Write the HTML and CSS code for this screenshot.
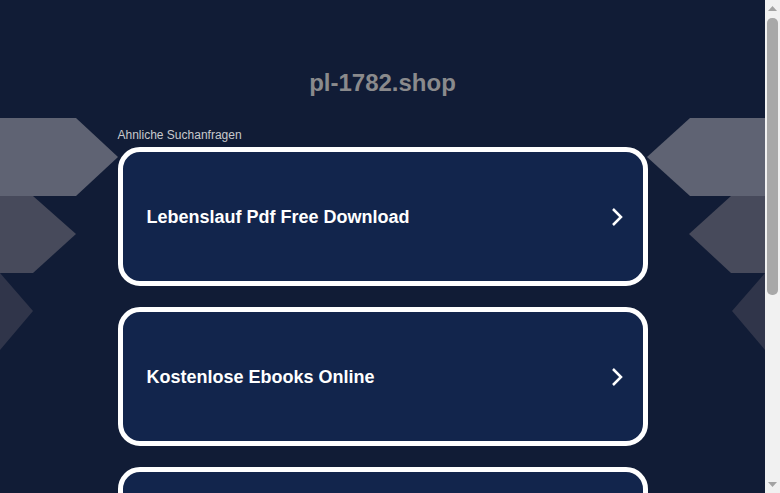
FILE: index.html
```html
<!DOCTYPE html>
<html>
<head>
<meta charset="utf-8">
<link rel="stylesheet" href="styles.css">
</head>
<body>
<div class="frame">
  <div class="viewport">
    <svg class="shapes" width="765" height="493" viewBox="0 0 765 493">
      <polygon points="0,118 76,118 118,157 76,196 0,196" fill="#5f6373"/>
      <polygon points="0,196 33,196 76,234 33,273 0,273" fill="#474a5b"/>
      <polygon points="0,273 33,311 0,350" fill="#30354a"/>
      <polygon points="765,118 690,118 647,157 690,196 765,196" fill="#5f6373"/>
      <polygon points="765,196 731,196 689,234 731,273 765,273" fill="#474a5b"/>
      <polygon points="765,273 732,311 765,350" fill="#30354a"/>
    </svg>
    <main class="page">
      <h1 class="title">pl-1782.shop</h1>
      <div class="label">Ahnliche Suchanfragen</div>
      <div class="list">
        <a class="card" href="#"><span>Lebenslauf Pdf Free Download</span>
          <svg class="chev" width="14" height="20" viewBox="0 0 14 20"><polyline points="3,2 11,10 3,18" fill="none" stroke="#fff" stroke-width="2.5"/></svg></a>
        <a class="card" href="#"><span>Kostenlose Ebooks Online</span>
          <svg class="chev" width="14" height="20" viewBox="0 0 14 20"><polyline points="3,2 11,10 3,18" fill="none" stroke="#fff" stroke-width="2.5"/></svg></a>
        <a class="card" href="#"></a>
      </div>
    </main>
  </div>
  <div class="scrollbar">
    <svg class="arrow" width="15" height="15" viewBox="0 0 15 15"><polygon points="3,11 12,11 7.5,6" fill="#a3a3a3"/></svg>
    <div class="track"><div class="thumb"></div></div>
    <svg class="arrow" width="15" height="15" viewBox="0 0 15 15"><polygon points="3,4 12,4 7.5,9" fill="#a3a3a3"/></svg>
  </div>
</div>
</body>
</html>
```
FILE: styles.css
```css
html, body {
  margin: 0;
  padding: 0;
  background: #111c36;
  font-family: "Liberation Sans", Arial, sans-serif;
  overflow: hidden;
}
.frame {
  display: flex;
  width: 780px;
  height: 493px;
  overflow: hidden;
}
.viewport {
  position: relative;
  width: 765px;
  height: 493px;
  overflow: hidden;
  background: #111c36;
}
.shapes {
  position: absolute;
  left: 0;
  top: 0;
  z-index: 0;
}
.page {
  position: relative;
  z-index: 1;
  width: 530px;
  margin: 0 auto;
  padding-top: 68px;
}
.title {
  margin: 0;
  text-align: center;
  font-size: 24px;
  font-weight: bold;
  color: #8a8a8c;
  line-height: 30px;
}
.label {
  margin-top: 30px;
  font-size: 12px;
  color: #c8c9cc;
  line-height: 14px;
  margin-bottom: 5px;
}
.list {
  display: flex;
  flex-direction: column;
  gap: 21px;
}
.card {
  box-sizing: border-box;
  height: 139px;
  flex: none;
  border: 5px solid #ffffff;
  border-radius: 22px;
  background: #12254c;
  display: flex;
  align-items: center;
  justify-content: space-between;
  padding: 1px 19px 0 24px;
  text-decoration: none;
  color: #ffffff;
  font-size: 18px;
  font-weight: bold;
}
.chev { display: block; }
.scrollbar {
  width: 15px;
  height: 493px;
  background: #f1f1f1;
  display: flex;
  flex-direction: column;
}
.arrow { display: block; flex: none; }
.track {
  flex: 1;
  padding: 3px 2px;
}
.thumb {
  height: 277px;
  background: #a8a8a8;
  border-radius: 5px;
}
```
